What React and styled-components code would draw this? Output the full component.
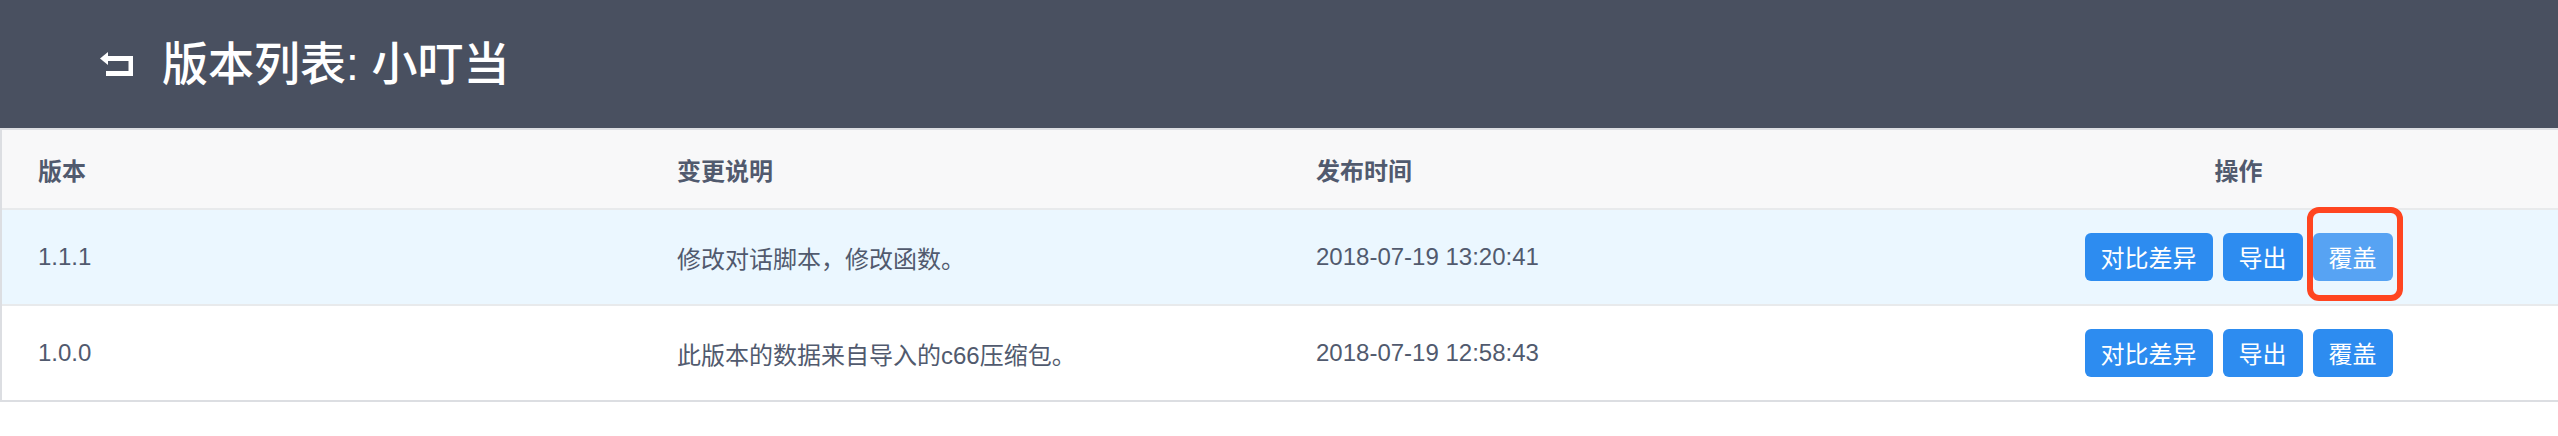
import React from "react";
import styled, { createGlobalStyle } from "styled-components";

const GlobalStyle = createGlobalStyle`
  body {
    margin: 0;
    background: #fff;
    font-family: "Liberation Sans", "Noto Sans CJK SC", sans-serif;
  }
`;

const TopBar = styled.header`
  height: 128px;
  background: #495060;
  display: flex;
  align-items: center;
  padding-left: 100px;
  gap: 29px;
`;

const Title = styled.h1`
  margin: 0;
  color: #fff;
  font-size: 46px;
  font-weight: 500;
  line-height: 1;
`;

const Table = styled.div`
  border-top: 2px solid #dcdee2;
  border-left: 2px solid #dcdee2;
`;

const Row = styled.div`
  display: grid;
  grid-template-columns: repeat(4, 1fr);
  height: ${(p) => (p.$head ? 78 : 94)}px;
  background: ${(p) => (p.$head ? "#f8f8f9" : p.$active ? "#ebf7ff" : "#fff")};
  border-bottom: 2px solid ${(p) => (p.$last ? "#dcdee2" : "#e8eaec")};
`;

const Cell = styled.div`
  display: flex;
  align-items: center;
  justify-content: ${(p) => (p.$center ? "center" : "flex-start")};
  gap: 10px;
  padding: 0 36px;
  font-size: 24px;
  color: #515a6e;
  font-weight: ${(p) => (p.$head ? 700 : 400)};
  white-space: nowrap;
`;

const Button = styled.button`
  position: relative;
  height: 48px;
  padding: 0 16px;
  border: none;
  border-radius: 6px;
  background: ${(p) => (p.$hover ? "#57a3f3" : "#2d8cf0")};
  color: #fff;
  font-family: "Noto Sans CJK SC", sans-serif;
  font-size: 24px;
  line-height: 48px;
  cursor: pointer;
`;

const Mark = styled.span`
  position: absolute;
  left: -6px;
  right: -10px;
  top: -26px;
  bottom: -20px;
  border: 6px solid #ff4520;
  border-radius: 12px;
  pointer-events: none;
`;

function BackIcon() {
  return (
    <svg width="33" height="24" viewBox="0 0 33 24" fill="#fff">
      <polygon points="0,6.5 8,0 8,13" />
      <rect x="7" y="4" width="26" height="5" />
      <rect x="28.5" y="4" width="4.5" height="20" />
      <rect x="6" y="19" width="27" height="5" />
    </svg>
  );
}

const versions = [
  {
    version: "1.1.1",
    note: "修改对话脚本，修改函数。",
    time: "2018-07-19 13:20:41",
    active: true,
  },
  {
    version: "1.0.0",
    note: "此版本的数据来自导入的c66压缩包。",
    time: "2018-07-19 12:58:43",
  },
];

export default function App() {
  return (
    <>
      <GlobalStyle />
      <TopBar>
        <BackIcon />
        <Title>版本列表: 小叮当</Title>
      </TopBar>
      <Table>
        <Row $head>
          <Cell $head>版本</Cell>
          <Cell $head>变更说明</Cell>
          <Cell $head>发布时间</Cell>
          <Cell $head $center>
            操作
          </Cell>
        </Row>
        {versions.map((v, i) => (
          <Row key={v.version} $active={v.active} $last={i === versions.length - 1}>
            <Cell>{v.version}</Cell>
            <Cell>{v.note}</Cell>
            <Cell>{v.time}</Cell>
            <Cell $center>
              <Button>对比差异</Button>
              <Button>导出</Button>
              <Button $hover={v.active}>
                覆盖
                {v.active && <Mark />}
              </Button>
            </Cell>
          </Row>
        ))}
      </Table>
    </>
  );
}
